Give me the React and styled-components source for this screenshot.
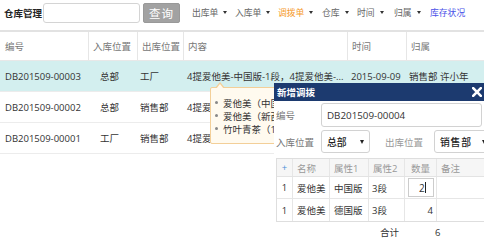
import React from "react";
import styled, { createGlobalStyle } from "styled-components";

const Global = createGlobalStyle`
  html, body { margin: 0; padding: 0; background: #fff; }
  body {
    font-family: "Open Sans", "Noto Sans CJK SC", sans-serif;
    font-size: 9.5px;
    color: #333;
  }
  * { box-sizing: border-box; }
`;

const Page = styled.div`
  position: relative;
  width: 484px;
  height: 240px;
  overflow: hidden;
`;

const TopBar = styled.div`
  display: flex;
  align-items: center;
  height: 25px;
  padding-left: 4px;
  margin-bottom: 5px;
`;

const Title = styled.div`
  font-weight: 700;
  font-size: 9.5px;
  color: #222;
  width: 39px;
`;

const SearchInput = styled.div`
  width: 97px;
  height: 20px;
  border: 1px solid #d4d4d4;
  border-radius: 3px;
  background: #fff;
`;

const SearchButton = styled.div`
  margin-left: 3px;
  width: 37px;
  height: 20px;
  background: #a2a2a2;
  border: 1px solid #999;
  border-radius: 2px;
  color: #fff;
  font-size: 11.5px;
  display: flex;
  align-items: center;
  justify-content: center;
  letter-spacing: 1px;
`;

const Menu = styled.div`
  display: flex;
  align-items: center;
  margin-left: 12px;
`;

const MenuItem = styled.div`
  display: flex;
  align-items: center;
  font-size: 8.8px;
  color: ${(p) => p.$color || "#666"};
  width: ${(p) => p.$w}px;
`;

const Caret = styled.span`
  display: inline-block;
  margin-left: 5px;
  width: 0;
  height: 0;
  border-left: 2.5px solid transparent;
  border-right: 2.5px solid transparent;
  border-top: 3px solid #333;
`;

const Grid = styled.div`
  display: grid;
  grid-template-columns: ${(p) => p.$cols};
  align-items: center;
`;

const HeadRow = styled(Grid)`
  height: 31px;
  border-top: 2px solid #e2e2e2;
  border-bottom: 1px solid #e8e8e8;
  color: #777;
`;

const HeadCell = styled.div`
  height: 100%;
  display: flex;
  align-items: center;
  padding-left: ${(p) => p.$pl ?? 4}px;
  border-left: ${(p) => (p.$first ? "none" : "1px solid #e6e6e6")};
`;

const Row = styled(Grid)`
  height: 31px;
  border-bottom: 1px solid #ececec;
  background: ${(p) => (p.$active ? "#d3efef" : "#fff")};
  color: #333;
`;

const Cell = styled.div`
  padding-left: ${(p) => p.$pl ?? 4}px;
  white-space: nowrap;
  overflow: hidden;
`;

const Tip = styled.div`
  position: absolute;
  left: 210px;
  top: 87px;
  width: 70px;
  height: 57px;
  background: #fffaef;
  border: 1px solid #f3cf98;
  border-radius: 2px;
  &::before {
    content: "";
    position: absolute;
    left: 4px;
    top: -6px;
    border-left: 5px solid transparent;
    border-right: 5px solid transparent;
    border-bottom: 6px solid #f3cf98;
  }
  &::after {
    content: "";
    position: absolute;
    left: 5px;
    top: -4px;
    border-left: 4px solid transparent;
    border-right: 4px solid transparent;
    border-bottom: 5px solid #fffaef;
  }
`;

const TipList = styled.div`
  width: 63px;
  padding: 8px 0 0 4px;
  overflow: hidden;
`;

const TipItem = styled.div`
  display: flex;
  align-items: center;
  height: 13px;
  white-space: nowrap;
  color: #333;
  &::before {
    content: "";
    flex-shrink: 0;
    width: 3px;
    height: 3px;
    border-radius: 50%;
    background: #888;
    margin-right: 5px;
  }
`;

const Modal = styled.div`
  position: absolute;
  left: 274px;
  top: 83px;
  width: 210px;
  height: 160px;
  background: #fff;
`;

const ModalHead = styled.div`
  height: 18px;
  background: #1c3a6f;
  display: flex;
  align-items: center;
  justify-content: space-between;
  padding: 0 2px 0 3px;
  color: #fff;
  font-weight: 700;
  font-size: 9.5px;
`;

const ModalBody = styled.div`
  padding: 2px 0 0 2px;
`;

const FormRow = styled.div`
  display: flex;
  align-items: center;
  margin-bottom: ${(p) => p.$mb || 0}px;
`;

const Label = styled.div`
  width: ${(p) => p.$w || 45}px;
  padding-left: ${(p) => p.$pl || 0}px;
  color: ${(p) => p.$color || "#777"};
  white-space: nowrap;
  flex-shrink: 0;
`;

const TextBox = styled.div`
  width: ${(p) => p.$w}px;
  height: ${(p) => p.$h}px;
  border: 1px solid #d2d2d2;
  border-radius: 3px;
  display: flex;
  align-items: center;
  padding-left: 5px;
  color: #333;
  font-size: 9.8px;
  flex-shrink: 0;
`;

const SelectBox = styled(TextBox)`
  justify-content: space-between;
  padding: 0 5px 0 5px;
  color: #222;
  font-weight: 500;
  letter-spacing: ${(p) => p.$ls || 0}px;
`;

const SmallCaret = styled.span`
  flex-shrink: 0;
  width: 0;
  height: 0;
  border-left: 2.5px solid transparent;
  border-right: 2.5px solid transparent;
  border-top: 4px solid #222;
`;

const Items = styled.div`
  width: 230px;
  border: 1px solid #dedede;
  border-right: none;
`;

const ItemHead = styled(Grid)`
  height: 18px;
  background: #f6f6f6;
  border-bottom: 1px solid #e3e3e3;
  color: #999;
`;

const ItemRow = styled(Grid)`
  height: 22px;
  border-bottom: ${(p) => (p.$last ? "none" : "1px solid #e6e6e6")};
  color: #333;
`;

const ICell = styled.div`
  height: 100%;
  display: flex;
  align-items: center;
  justify-content: ${(p) => p.$align || "flex-start"};
  padding: 0 ${(p) => p.$pr ?? 0}px 0 ${(p) => p.$pl ?? 4}px;
  border-left: ${(p) => (p.$first ? "none" : "1px solid #e6e6e6")};
  color: ${(p) => p.$color || "inherit"};
  white-space: nowrap;
`;

const QtyInput = styled.div`
  width: 26px;
  height: 19px;
  border: 1px solid #ccc;
  display: flex;
  align-items: center;
  padding-left: 10px;
  font-size: 10px;
  &::after {
    content: "";
    width: 1px;
    height: 11px;
    background: #222;
  }
`;

const Total = styled.div`
  display: flex;
  align-items: center;
  height: 20px;
  padding-left: 104px;
  color: #333;
`;

const TotalNum = styled.span`
  margin-left: 36px;
`;

const headCols = "88px 49px 46px 164px 59px 1fr";
const bodyCols = "96px 41px 46px 164px 59px 1fr";
const itemCols = "15px 37px 39px 36px 32px 71px";

const rows = [
  { id: "DB201509-00003", inn: "总部", out: "工厂", content: "4提爱他美-中国版-1段，4提爱他美-...", date: "2015-09-09", owner: "销售部 许小年", active: true },
  { id: "DB201509-00002", inn: "总部", out: "销售部", content: "4提爱他美-中国版-1段，4提爱他美-...", date: "2015-09-08", owner: "销售部 许小年" },
  { id: "DB201509-00001", inn: "工厂", out: "销售部", content: "4提爱他美-中国版-1段，4提爱他美-...", date: "2015-09-07", owner: "销售部 许小年" },
];

const menus = [
  { t: "出库单", w: 43 },
  { t: "入库单", w: 43 },
  { t: "调拨单", w: 44, c: "#f59a2b" },
  { t: "仓库", w: 35 },
  { t: "时间", w: 37 },
  { t: "归属", w: 36 },
];

function CloseIcon() {
  return (
    <svg width="10" height="10" viewBox="0 0 10 10">
      <path d="M1.2 1.2 L8.8 8.8 M8.8 1.2 L1.2 8.8" stroke="#fff" strokeWidth="2.6" strokeLinecap="square" />
    </svg>
  );
}

export default function App() {
  return (
    <Page>
      <Global />
      <TopBar>
        <Title>仓库管理</Title>
        <SearchInput />
        <SearchButton>查询</SearchButton>
        <Menu>
          {menus.map((m) => (
            <MenuItem key={m.t} $w={m.w} $color={m.c}>
              {m.t}
              <Caret />
            </MenuItem>
          ))}
          <MenuItem $color="#4a52e8">库存状况</MenuItem>
        </Menu>
      </TopBar>

      <HeadRow $cols={headCols}>
        <HeadCell $first $pl={5}>编号</HeadCell>
        <HeadCell>入库位置</HeadCell>
        <HeadCell>出库位置</HeadCell>
        <HeadCell>内容</HeadCell>
        <HeadCell>时间</HeadCell>
        <HeadCell>归属</HeadCell>
      </HeadRow>
      {rows.map((r) => (
        <Row key={r.id} $cols={bodyCols} $active={r.active}>
          <Cell $pl={5}>{r.id}</Cell>
          <Cell>{r.inn}</Cell>
          <Cell $pl={3}>{r.out}</Cell>
          <Cell>{r.content}</Cell>
          <Cell>{r.date}</Cell>
          <Cell $pl={3}>{r.owner}</Cell>
        </Row>
      ))}

      <Tip>
        <TipList>
          <TipItem>爱他美（中国版-1段）×4</TipItem>
          <TipItem>爱他美（新西兰版-1段）×4</TipItem>
          <TipItem>竹叶青茶（14）×2</TipItem>
        </TipList>
      </Tip>

      <Modal>
        <ModalHead>
          <span>新增调拨</span>
          <CloseIcon />
        </ModalHead>
        <ModalBody>
          <FormRow $mb={3}>
            <Label>编号</Label>
            <TextBox $w={161} $h={24}>DB201509-00004</TextBox>
          </FormRow>
          <FormRow $mb={5}>
            <Label>入库位置</Label>
            <SelectBox $w={49} $h={23}>
              总部
              <SmallCaret />
            </SelectBox>
            <Label $w={64} $pl={15} $color="#999">出库位置</Label>
            <SelectBox $w={58} $h={23} $ls={0.8}>
              销售部
              <SmallCaret />
            </SelectBox>
          </FormRow>
          <Items>
            <ItemHead $cols={itemCols}>
              <ICell $first $pl={0} $align="center" $color="#4b8fd6">+</ICell>
              <ICell>名称</ICell>
              <ICell>属性1</ICell>
              <ICell>属性2</ICell>
              <ICell $pl={0} $align="center">数量</ICell>
              <ICell>备注</ICell>
            </ItemHead>
            <ItemRow $cols={itemCols}>
              <ICell $first $pl={0} $align="center">1</ICell>
              <ICell>爱他美</ICell>
              <ICell>中国版</ICell>
              <ICell $pl={3}>3段</ICell>
              <ICell $pl={3}><QtyInput>2</QtyInput></ICell>
              <ICell />
            </ItemRow>
            <ItemRow $cols={itemCols} $last>
              <ICell $first $pl={0} $align="center">1</ICell>
              <ICell>爱他美</ICell>
              <ICell>德国版</ICell>
              <ICell $pl={3}>3段</ICell>
              <ICell $align="flex-end" $pr={3}>4</ICell>
              <ICell />
            </ItemRow>
          </Items>
          <Total>
            合计
            <TotalNum>6</TotalNum>
          </Total>
        </ModalBody>
      </Modal>
    </Page>
  );
}
